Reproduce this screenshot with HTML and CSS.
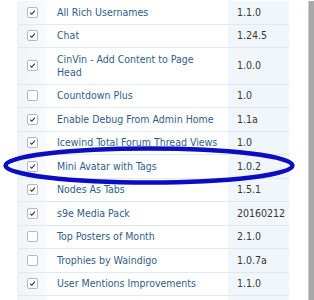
FILE: index.html
```html
<!DOCTYPE html>
<html>
<head>
<meta charset="utf-8">
<link rel="stylesheet" href="styles.css">
</head>
<body>
<div class="page">
  <div class="list">
    <div class="row"><div class="cb"><span class="box on"><svg viewBox="0 0 11 11"><path d="M2.6 5.6 L4.6 7.7 L8.4 3.2"/></svg></span></div><div class="name">All Rich Usernames</div><div class="ver">1.1.0</div></div>
    <div class="row"><div class="cb"><span class="box on"><svg viewBox="0 0 11 11"><path d="M2.6 5.6 L4.6 7.7 L8.4 3.2"/></svg></span></div><div class="name">Chat</div><div class="ver">1.24.5</div></div>
    <div class="row"><div class="cb"><span class="box on"><svg viewBox="0 0 11 11"><path d="M2.6 5.6 L4.6 7.7 L8.4 3.2"/></svg></span></div><div class="name">CinVin - Add Content to Page Head</div><div class="ver">1.0.0</div></div>
    <div class="row"><div class="cb"><span class="box"></span></div><div class="name">Countdown Plus</div><div class="ver">1.0</div></div>
    <div class="row"><div class="cb"><span class="box on"><svg viewBox="0 0 11 11"><path d="M2.6 5.6 L4.6 7.7 L8.4 3.2"/></svg></span></div><div class="name">Enable Debug From Admin Home</div><div class="ver">1.1a</div></div>
    <div class="row"><div class="cb"><span class="box on"><svg viewBox="0 0 11 11"><path d="M2.6 5.6 L4.6 7.7 L8.4 3.2"/></svg></span></div><div class="name">Icewind Total Forum Thread Views</div><div class="ver">1.0</div></div>
    <div class="row"><div class="cb"><span class="box on"><svg viewBox="0 0 11 11"><path d="M2.6 5.6 L4.6 7.7 L8.4 3.2"/></svg></span></div><div class="name">Mini Avatar with Tags</div><div class="ver">1.0.2</div></div>
    <div class="row"><div class="cb"><span class="box on"><svg viewBox="0 0 11 11"><path d="M2.6 5.6 L4.6 7.7 L8.4 3.2"/></svg></span></div><div class="name">Nodes As Tabs</div><div class="ver">1.5.1</div></div>
    <div class="row"><div class="cb"><span class="box on"><svg viewBox="0 0 11 11"><path d="M2.6 5.6 L4.6 7.7 L8.4 3.2"/></svg></span></div><div class="name">s9e Media Pack</div><div class="ver">20160212</div></div>
    <div class="row"><div class="cb"><span class="box"></span></div><div class="name">Top Posters of Month</div><div class="ver">2.1.0</div></div>
    <div class="row"><div class="cb"><span class="box"></span></div><div class="name">Trophies by Waindigo</div><div class="ver">1.0.7a</div></div>
    <div class="row"><div class="cb"><span class="box on"><svg viewBox="0 0 11 11"><path d="M2.6 5.6 L4.6 7.7 L8.4 3.2"/></svg></span></div><div class="name">User Mentions Improvements</div><div class="ver">1.1.0</div></div>
  </div>
  <div class="gap"></div>
  <div class="scroll"></div>
  <svg class="mark" width="314" height="300" viewBox="0 0 314 300"><ellipse cx="149" cy="165.5" rx="143.5" ry="17"/></svg>
</div>
</body>
</html>
```
FILE: styles.css
```css
html, body {
  margin: 0;
  padding: 0;
  background: #fff;
}
.page {
  position: relative;
  width: 314px;
  height: 300px;
  overflow: hidden;
  display: flex;
  padding-left: 17px;
  padding-top: 1px;
  box-sizing: border-box;
  font-family: "DejaVu Sans Condensed", "DejaVu Sans", sans-serif;
  font-stretch: condensed;
  font-size: 10.5px;
}
.list {
  width: 272px;
  flex: none;
  border-left: 1px solid #eef2f6;
  box-sizing: border-box;
  background: linear-gradient(to right, #f0f4f8 0, #f8fafc 29px, #fff 29px, #fff 210px, #f1f6fa 210px);
}
.row {
  display: grid;
  grid-template-columns: 29px 181px 61px;
  border-bottom: 1px solid #e0e8f0;
  line-height: 13px;
}
.cb {
  display: flex;
  align-items: center;
  justify-content: center;
}
.box {
  width: 11px;
  height: 11px;
  box-sizing: border-box;
  border: 1px solid #b4b8bc;
  border-radius: 2px;
  background: #fff;
  display: block;
}
.box svg {
  display: block;
  width: 9px;
  height: 9px;
  margin: 0;
}
.box svg path {
  fill: none;
  stroke: #2a2a2a;
  stroke-width: 1.3;
}
.name {
  padding: 4.75px 10px;
  color: #305d89;
}
.ver {
  padding: 4.75px 9px;
  color: #363636;
  display: flex;
  align-items: center;
}
.gap {
  width: 19px;
  flex: none;
}
.scroll {
  width: 5px;
  flex: none;
  background: #a9a9a9;
  border-left: 1px solid #cfcfcf;
}
.mark {
  position: absolute;
  left: 0;
  top: 0;
  pointer-events: none;
}
.mark ellipse {
  fill: none;
  stroke: #0c0cc2;
  stroke-width: 4.5;
}
```
